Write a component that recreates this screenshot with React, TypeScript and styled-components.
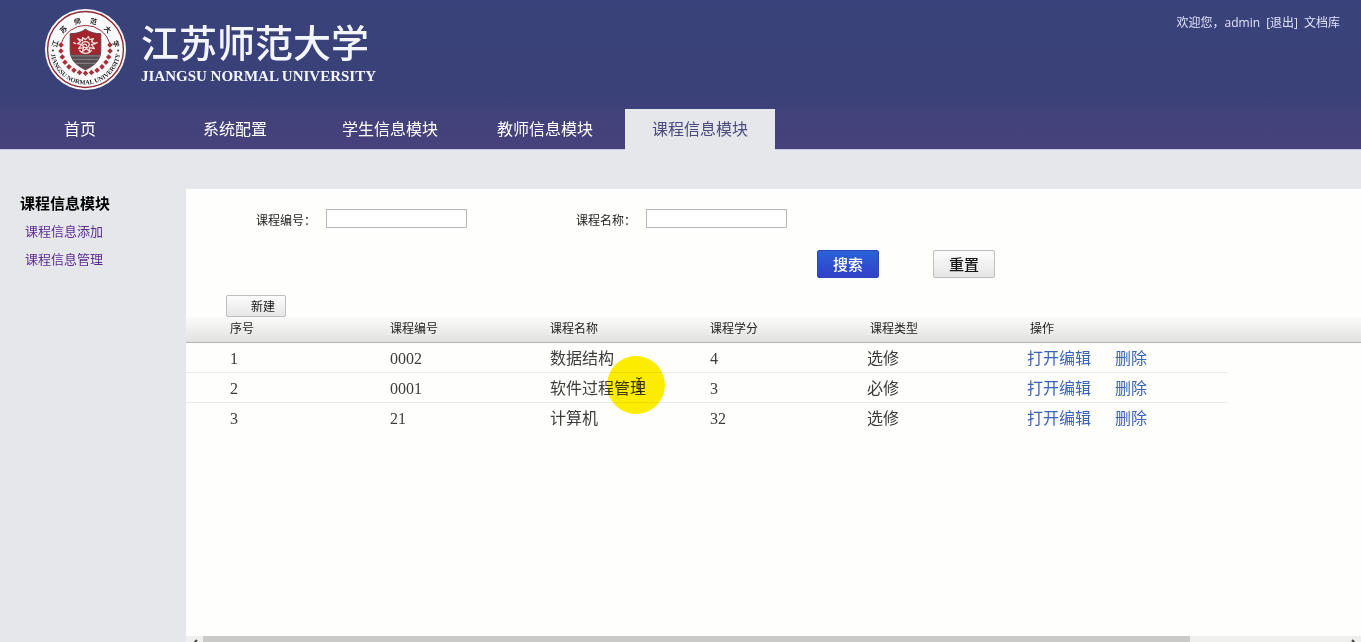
import React from "react";
import styled, { createGlobalStyle, css } from "styled-components";

const Global = createGlobalStyle`
  * { box-sizing: border-box; }
  body { margin: 0; background: #e5e7eb; font-family: "Open Sans", "Noto Sans CJK SC", sans-serif; }
`;

const Page = styled.div`
  display: flex;
  flex-direction: column;
  min-height: 100vh;
`;

const Header = styled.header`
  display: flex;
  justify-content: space-between;
  align-items: flex-start;
  height: 109px;
  padding: 8px 21px 0 44px;
  background: linear-gradient(#3a427b 0, #3a4178 96px, #3f4179 109px);
`;

const Brand = styled.a`
  display: flex;
  gap: 14px;
  color: #f4f6ff;
  text-decoration: none;
`;

const BrandText = styled.span`
  display: flex;
  flex-direction: column;
  padding-top: 8px;
`;

const BrandName = styled.span`
  font: 500 38px/50px "Noto Sans CJK SC", sans-serif;
`;

const BrandLatin = styled.span`
  font: bold 15px/20px "Liberation Serif", serif;
  white-space: nowrap;
`;

const Account = styled.div`
  display: flex;
  gap: 6px;
  padding-top: 5px;
  font-size: 12px;
  line-height: 20px;
  color: #dfe4fa;
  white-space: nowrap;
`;

const AccountLink = styled.a`
  color: inherit;
  text-decoration: none;
`;

const Nav = styled.nav`
  display: flex;
  gap: 5px;
  height: 41px;
  padding-left: 5px;
  background: linear-gradient(#42427b, #46417a);
  border-bottom: 1px solid #c3c6e4;
`;

const Tab = styled.a<{ $active?: boolean }>`
  flex: 0 0 150px;
  height: 41px;
  font-size: 16px;
  line-height: 40px;
  text-align: center;
  text-decoration: none;
  color: ${(p) => (p.$active ? "#4a4b7c" : "#ffffff")};
  background: ${(p) => (p.$active ? "#e5e7eb" : "transparent")};
`;

const Body = styled.div`
  display: flex;
  flex: 1;
  padding-top: 39px;
`;

const Sidebar = styled.aside`
  flex: 0 0 186px;
  padding: 3px 20px;
`;

const SideTitle = styled.h2`
  margin: 0;
  font-size: 15px;
  line-height: 22px;
  color: #000;
`;

const SideList = styled.ul`
  margin: 3px 0 0;
  padding: 0 0 0 5px;
  list-style: none;
  font-size: 13px;
  line-height: 28px;
`;

const SideLink = styled.a`
  color: #5a2d91;
  text-decoration: none;
`;

const Panel = styled.main`
  display: flex;
  flex: 1;
  flex-direction: column;
  min-width: 0;
  background: #fefefd;
`;

const SearchForm = styled.form`
  padding: 20px 0 0 70px;
`;

const Fields = styled.div`
  display: flex;
`;

const Field = styled.label`
  display: flex;
  flex: 0 0 320px;
  height: 22px;
  font-size: 12px;
  line-height: 24px;
  color: #222;
`;

const FieldName = styled.span`
  flex: 0 0 70px;
`;

const TextBox = styled.input`
  width: 141px;
  height: 19px;
  border: 1px solid #b9b9b9;
  background: #fff;
`;

const Actions = styled.div`
  display: flex;
  gap: 54px;
  padding: 19px 0 17px 561px;
`;

const Button = styled.button<{ $kind?: "primary" | "small" }>`
  width: 62px;
  height: 28px;
  padding: 0;
  border: 1px solid #bdbdbd;
  border-radius: 2px;
  background: linear-gradient(#fdfdfd, #e6e6e6);
  font: 500 15px/24px "Noto Sans CJK SC", sans-serif;
  color: #151515;
  ${(p) =>
    p.$kind === "primary" &&
    css`
      border-color: #2b49bb;
      background: linear-gradient(#2a62d6, #3140c8);
      color: #fff;
    `}
  ${(p) =>
    p.$kind === "small" &&
    css`
      width: 60px;
      height: 22px;
      padding-left: 14px;
      font-size: 12px;
      font-weight: 400;
      line-height: 20px;
    `}
`;

const Toolbar = styled.div`
  display: flex;
  padding-left: 40px;
`;

const Table = styled.table`
  width: 100%;
  table-layout: fixed;
  border-collapse: separate;
  border-spacing: 0;
`;

const HeadRow = styled.tr`
  background: linear-gradient(#fbfbfa, #e0e0df);
`;

const HeadCell = styled.th`
  height: 26px;
  padding: 0 0 2px 4px;
  border-bottom: 1px solid #b4b4b4;
  font-size: 12px;
  font-weight: 400;
  line-height: 20px;
  text-align: left;
  color: #222;
  &:first-child { padding-left: 44px; }
`;

const Cell = styled.td<{ $tight?: boolean }>`
  position: relative;
  height: 30px;
  padding: 2px 0 0 ${(p) => (p.$tight ? 1 : 4)}px;
  border-bottom: 1px solid #ececec;
  font: 16px/24px "Liberation Serif", "Noto Sans CJK SC", serif;
  white-space: nowrap;
  color: #3c3c3c;
  &:first-child { padding-left: 44px; }
  tr:last-child > & { border-bottom-color: transparent; }
`;

const RowLink = styled.a`
  margin-right: 24px;
  color: #3a62b5;
  text-decoration: none;
`;

const Pointer = styled.svg`
  position: absolute;
  z-index: 1;
  top: -17px;
  left: 61px;
  mix-blend-mode: multiply;
  pointer-events: none;
`;

const ScrollArea = styled.div`
  display: flex;
  height: 6px;
  margin-top: auto;
  overflow: hidden;
  background: #efefee;
`;

const ScrollArrow = styled.svg`
  flex: 0 0 17px;
`;

const ScrollTrack = styled.div`
  flex: 1;
`;

const ScrollThumb = styled.div`
  width: calc(100% - 154px);
  height: 17px;
  background: #cacac9;
`;

const beads = Array.from({ length: 15 }, (_, i) => {
  const a = ((-8 + (196 * i) / 14) * Math.PI) / 180;
  return { x: 42 + 25 * Math.cos(a), y: 41 + 25 * Math.sin(a) };
});

function Seal() {
  return (
    <svg width="83" height="83" viewBox="0 0 84 84" role="img" aria-label="校徽">
      <circle cx="42" cy="42" r="41" fill="#fbfafc" />
      <circle cx="42" cy="42" r="38.4" fill="none" stroke="#8f2d36" strokeWidth="1.4" />
      <path d="M17.5 36 A25.5 25.5 0 0 1 66.500 36" fill="none" stroke="#9c2b35" strokeWidth="1" />
      {beads.map((b, i) => (
        <path key={i} d={`M${b.x} ${b.y - 2.8}l2.800 2.800-2.800 2.800-2.800-2.800z`} fill="#a8303a" />
      ))}
      <path d="M42 21.500c5 3.500 10 4.500 15.500 4.500v17c0 10-7 15.500-15.500 19.500-8.500-4-15.500-9.500-15.500-19.500V26c5.500 0 10.500-1 15.500-4.500z" fill="#a3242c" stroke="#5d4145" strokeWidth="1" />
      <path d="M27 47h30c-1.500 7.500-7.500 11.500-15 15-7.500-3.500-13.500-7.500-15-15z" fill="#554e52" />
      <path d="M27 48.500h30M29 52h26M31.500 56h21" stroke="#a59da0" strokeWidth=".7" />
      <g fill="none" stroke="#f5dfdd" strokeWidth="1.300" strokeLinecap="round" strokeLinejoin="round">
        <path d="M34 31l3 3-3 2 4 1-3 4 5-1-1 4 4-3 3 3v-4l5 1-3-4 4-1-4-2 2-3-4 1-1-3-3 3-3-2v3z" />
        <path d="M38 37c1-4 7-4 8 0-1 4-6 4-7 1 1-2 4-2 4 0M36 43c3 4 9 4 12 0M32 36l-2-1M51 36l3-1" />
      </g>
      <defs>
        <path id="sealTop" d="M13 44a29 29 0 0 1 58 0" />
        <path id="sealBottom" d="M6.600 42a35.400 35.400 0 0 0 70.800 0" />
      </defs>
      {["江", "苏", "师", "范", "大", "学"].map((c, i) => (
        <text key={c} fontSize="7" fontWeight="700" fontFamily="'Noto Sans CJK SC', sans-serif" textAnchor="middle" fill="#222">
          <textPath href="#sealTop" startOffset={`${8 + i * 16.8}%`}>{c}</textPath>
        </text>
      ))}
      <text fontSize="6.5" fontWeight="700" fontFamily="'Liberation Serif', serif" textAnchor="middle" fill="#1d1d22">
        <textPath href="#sealBottom" startOffset="50%">JIANGSU NORMAL UNIVERSITY</textPath>
      </text>
      <circle cx="9" cy="43" r="1" fill="#333" />
      <circle cx="75" cy="43" r="1" fill="#333" />
    </svg>
  );
}

const tabs = ["首页", "系统配置", "学生信息模块", "教师信息模块", "课程信息模块"];
const columns = ["序号", "课程编号", "课程名称", "课程学分", "课程类型", "操作"];
const widths = [200, 160, 160, 160, 160, 202];
const courses = [
  { code: "0002", name: "数据结构", credit: "4", type: "选修" },
  { code: "0001", name: "软件过程管理", credit: "3", type: "必修", pointed: true },
  { code: "21", name: "计算机", credit: "32", type: "选修" },
];

export default function App() {
  return (
    <Page>
      <Global />
      <Header>
        <Brand href="#">
          <Seal />
          <BrandText>
            <BrandName>江苏师范大学</BrandName>
            <BrandLatin>JIANGSU NORMAL UNIVERSITY</BrandLatin>
          </BrandText>
        </Brand>
        <Account>
          <span>欢迎您，admin</span>
          <AccountLink href="#">[退出]</AccountLink>
          <AccountLink href="#">文档库</AccountLink>
        </Account>
      </Header>
      <Nav>
        {tabs.map((t, i) => (
          <Tab key={t} href="#" $active={i === 4}>{t}</Tab>
        ))}
      </Nav>
      <Body>
        <Sidebar>
          <SideTitle>课程信息模块</SideTitle>
          <SideList>
            <li><SideLink href="#">课程信息添加</SideLink></li>
            <li><SideLink href="#">课程信息管理</SideLink></li>
          </SideList>
        </Sidebar>
        <Panel>
          <SearchForm onSubmit={(e) => e.preventDefault()}>
            <Fields>
              <Field><FieldName>课程编号：</FieldName><TextBox type="text" /></Field>
              <Field><FieldName>课程名称：</FieldName><TextBox type="text" /></Field>
            </Fields>
            <Actions>
              <Button type="submit" $kind="primary">搜索</Button>
              <Button type="reset">重置</Button>
            </Actions>
          </SearchForm>
          <Toolbar><Button type="button" $kind="small">新建</Button></Toolbar>
          <Table>
            <colgroup>
              {widths.map((w, i) => <col key={i} width={w} />)}
              <col />
            </colgroup>
            <thead>
              <HeadRow>
                {columns.map((c) => <HeadCell key={c} scope="col">{c}</HeadCell>)}
                <HeadCell as="td" />
              </HeadRow>
            </thead>
            <tbody>
              {courses.map((c, i) => (
                <tr key={c.code}>
                  <Cell>{i + 1}</Cell>
                  <Cell>{c.code}</Cell>
                  <Cell>
                    {c.name}
                    {c.pointed && (
                      <Pointer width="58" height="58" viewBox="0 0 58 58" aria-hidden="true">
                        <circle cx="29" cy="29" r="29" fill="#fdee00" />
                        <path d="M29 22h2l1 1 1-1h2M32 23v12M29 36h2l1-1 1 1h2" fill="none" stroke="#333" />
                      </Pointer>
                    )}
                  </Cell>
                  <Cell>{c.credit}</Cell>
                  <Cell $tight>{c.type}</Cell>
                  <Cell $tight>
                    <RowLink href="#">打开编辑</RowLink>
                    <RowLink href="#">删除</RowLink>
                  </Cell>
                </tr>
              ))}
            </tbody>
          </Table>
          <ScrollArea aria-hidden="true">
            <ScrollArrow width="17" height="17" viewBox="0 0 17 17">
              <path d="M11 4L7 8l4 4" fill="none" stroke="#444" strokeWidth="2" />
            </ScrollArrow>
            <ScrollTrack><ScrollThumb /></ScrollTrack>
            <ScrollArrow width="17" height="17" viewBox="0 0 17 17">
              <path d="M8 4l4 4-4 4" fill="none" stroke="#444" strokeWidth="2" />
            </ScrollArrow>
          </ScrollArea>
        </Panel>
      </Body>
    </Page>
  );
}
